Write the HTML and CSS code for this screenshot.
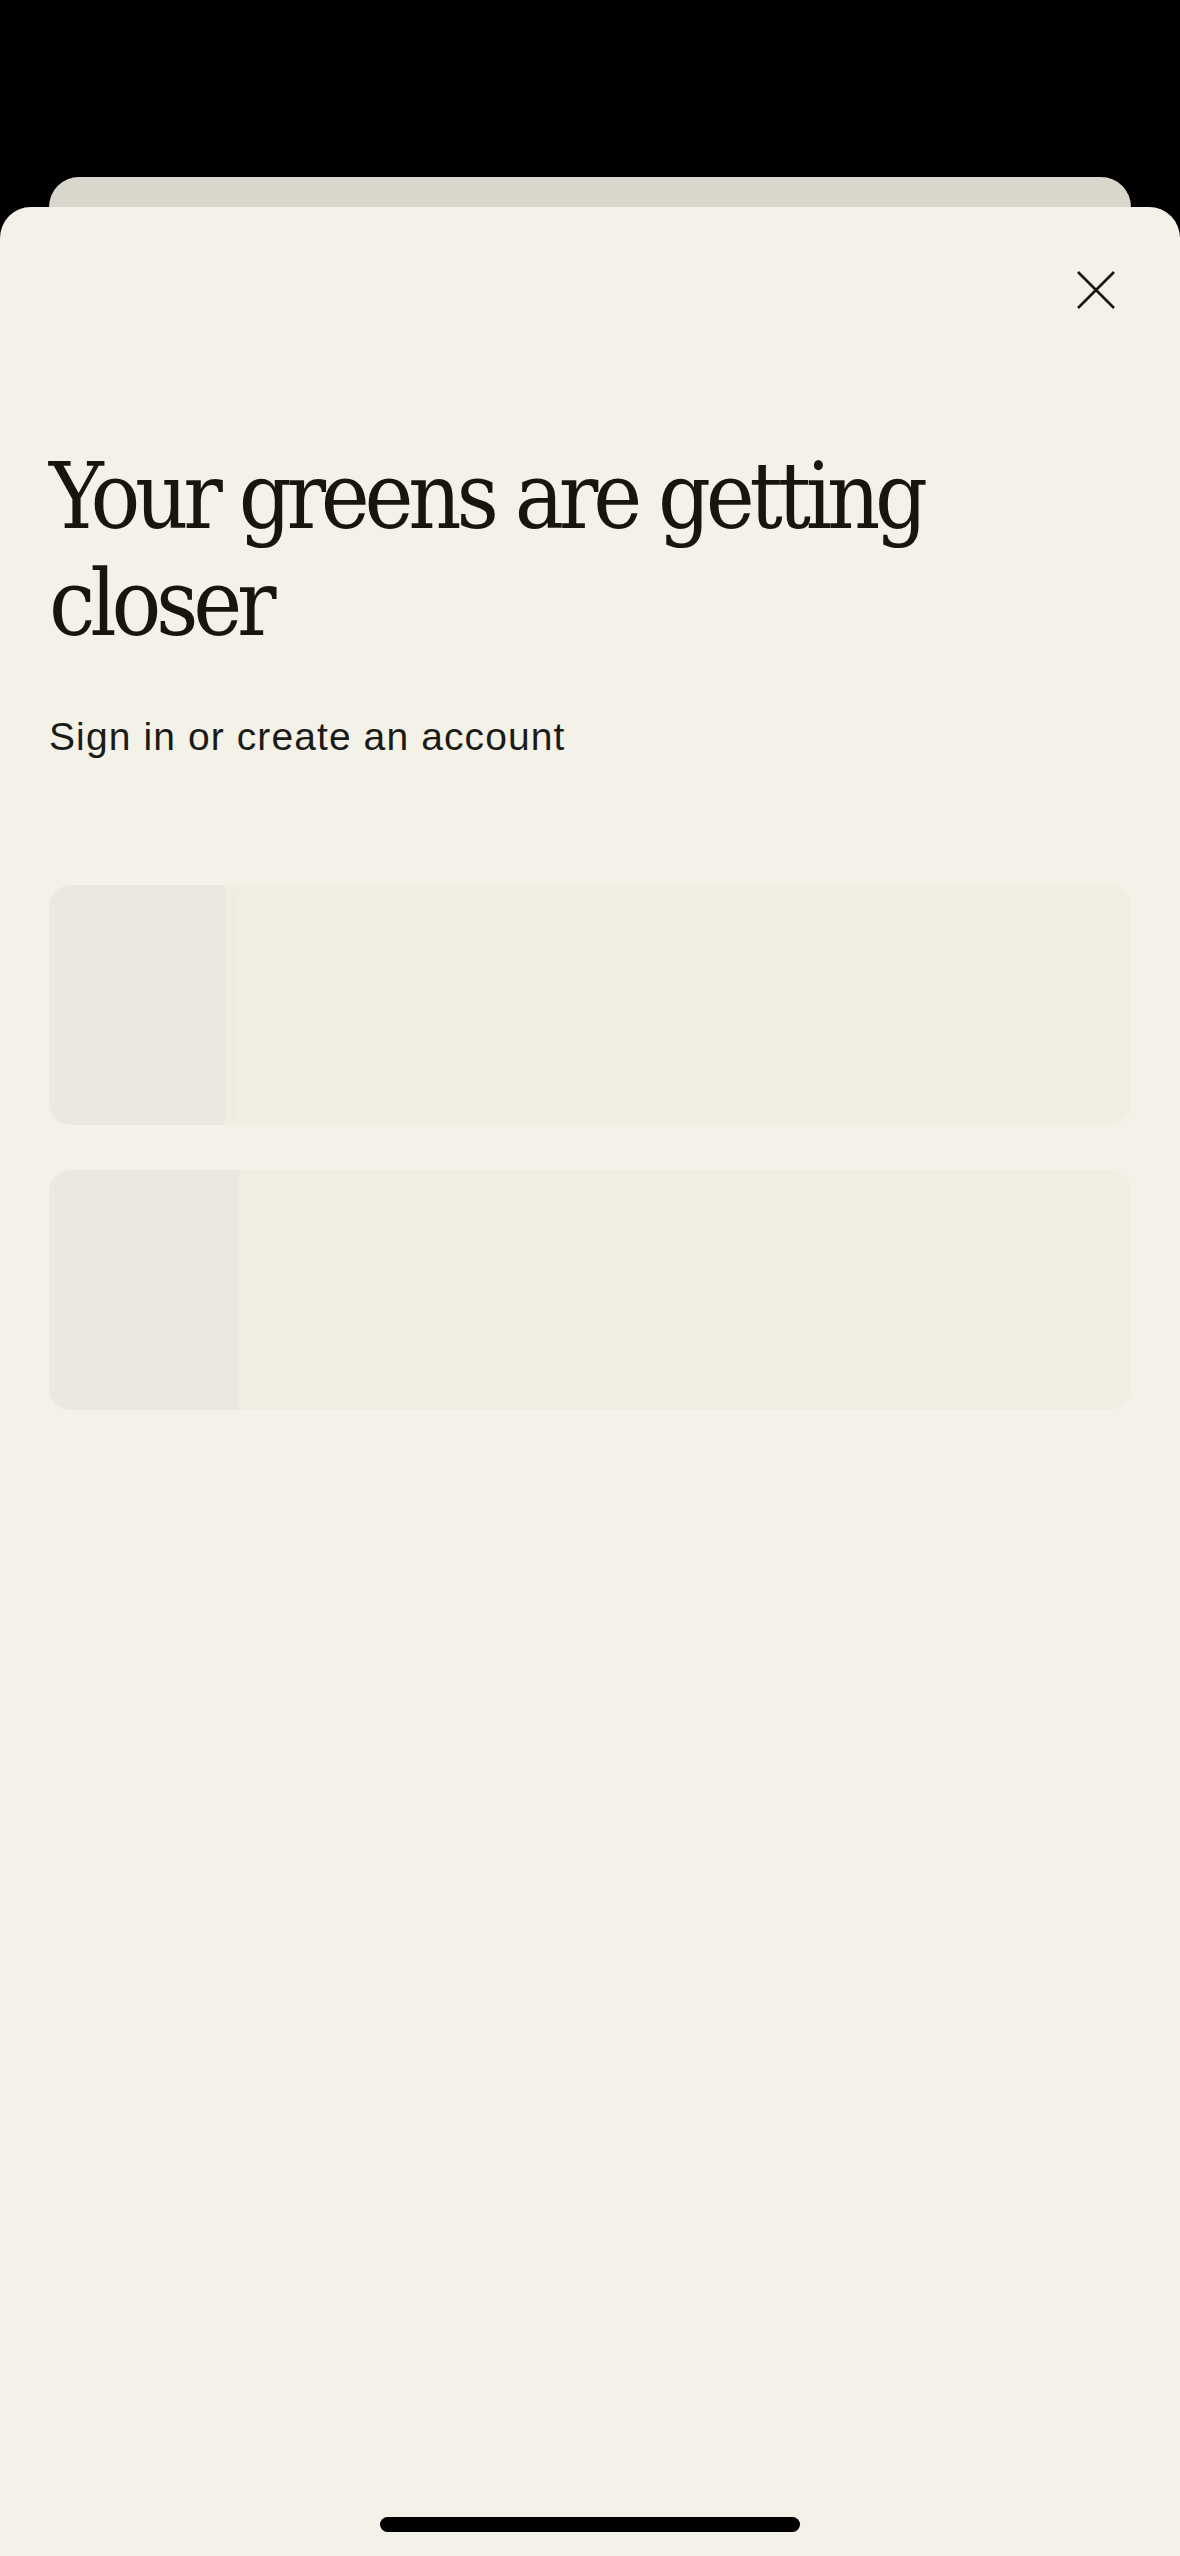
FILE: index.html
```html
<!DOCTYPE html>
<html>
  <head>
    <meta charset="utf-8">
    <link rel="stylesheet" href="styles.css">
  </head>
  <body>
    <div class="screen">
      <div class="backCard"></div>
      <div class="sheet">
        <div class="sheetHeader">
          <button class="closeBtn" aria-label="Close">
            <svg width="40" height="40" viewBox="0 0 40 40">
              <path d="M2 2 L38 38 M38 2 L2 38" stroke="#16160f" stroke-width="2.6" fill="none"/>
            </svg>
          </button>
        </div>
        <h1 class="title">Your greens are getting closer</h1>
        <p class="subtitle">Sign in or create an account</p>
        <div class="options">
          <div class="skeleton">
            <div class="skeletonIcon"></div>
            <div class="skeletonEdge"></div>
          </div>
          <div class="skeleton">
            <div class="skeletonIcon wide"></div>
          </div>
        </div>
        <div class="homeIndicator"></div>
      </div>
    </div>
  </body>
</html>
```

FILE: styles.css
```css
html, body {
  margin: 0;
  padding: 0;
  background: #000;
}
.screen {
  width: 1180px;
  height: 2556px;
  display: flex;
  flex-direction: column;
  padding-top: 177px;
  box-sizing: border-box;
  overflow: hidden;
}
.backCard {
  height: 30px;
  margin: 0 49px;
  background: #d9d7cb;
  border-radius: 30px 30px 0 0;
  flex-shrink: 0;
}
.sheet {
  flex: 1;
  display: flex;
  flex-direction: column;
  background: #f4f2e8;
  border-radius: 31px 31px 0 0;
  padding: 48px 49px 24px;
}
.sheetHeader {
  display: flex;
  justify-content: flex-end;
}
.closeBtn {
  width: 70px;
  height: 70px;
  padding: 0;
  border: none;
  background: none;
  display: flex;
  align-items: center;
  justify-content: center;
}
.title {
  margin: 118px 0 0;
  font-family: "DejaVu Serif Condensed", "DejaVu Serif", serif;
  font-stretch: condensed;
  font-weight: 400;
  font-size: 92px;
  line-height: 107px;
  letter-spacing: -5.2px;
  color: #16160f;
  max-width: 960px;
}
.subtitle {
  margin: 56px 0 0;
  font-family: "Liberation Sans", Arial, sans-serif;
  font-size: 39px;
  line-height: 47px;
  letter-spacing: 1.1px;
  color: #1b1b16;
}
.options {
  margin-top: 125px;
  display: flex;
  flex-direction: column;
  gap: 45px;
}
.skeleton {
  height: 240px;
  border-radius: 22px;
  background: #f0eee3;
  display: flex;
  overflow: hidden;
}
.skeletonIcon {
  width: 176px;
  background: #ece8e0;
}
.skeletonIcon.wide {
  width: 190px;
}
.skeletonEdge {
  width: 4px;
  margin: 10px 0 4px 7px;
  background: #ece9e0;
}
.homeIndicator {
  margin: auto auto 0;
  width: 420px;
  height: 15px;
  border-radius: 8px;
  background: #000;
}
```
